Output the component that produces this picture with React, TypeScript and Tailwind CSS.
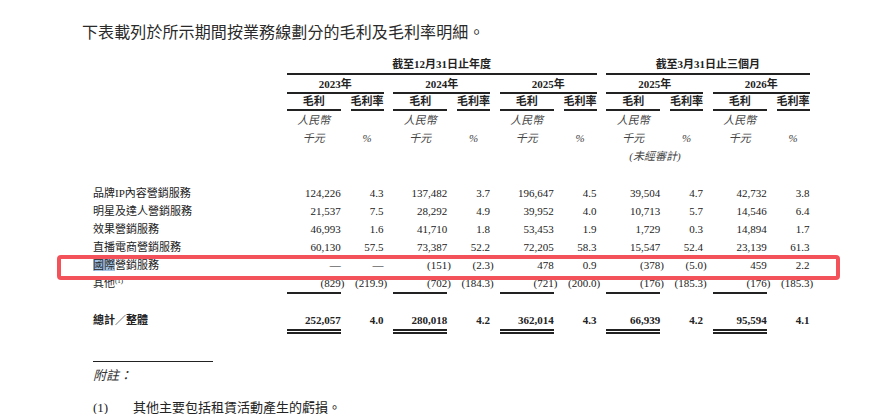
import React from "react";

const cols = "grid grid-cols-[184px_repeat(5,54px_33px)] gap-x-[9.75px]";

const rows: string[][] = [
  ["品牌IP內容營銷服務", "124,226", "4.3", "137,482", "3.7", "196,647", "4.5", "39,504", "4.7", "42,732", "3.8"],
  ["明星及達人營銷服務", "21,537", "7.5", "28,292", "4.9", "39,952", "4.0", "10,713", "5.7", "14,546", "6.4"],
  ["效果營銷服務", "46,993", "1.6", "41,710", "1.8", "53,453", "1.9", "1,729", "0.3", "14,894", "1.7"],
  ["直播電商營銷服務", "60,130", "57.5", "73,387", "52.2", "72,205", "58.3", "15,547", "52.4", "23,139", "61.3"],
  ["國際營銷服務", "—", "—", "(151)", "(2.3)", "478", "0.9", "(378)", "(5.0)", "459", "2.2"],
  ["其他", "(829)", "(219.9)", "(702)", "(184.3)", "(721)", "(200.0)", "(176)", "(185.3)", "(176)", "(185.3)"],
];

const total = ["總計／整體", "252,057", "4.0", "280,018", "4.2", "362,014", "4.3", "66,939", "4.2", "95,594", "4.1"];

const years = ["2023", "2024", "2025", "2025", "2026"];

function Val({ v }: { v: string }) {
  const hang = v.endsWith(")");
  return <span className={hang ? "inline-block -mr-[3.7px]" : "inline-block"}>{v}</span>;
}

function Label({ text }: { text: string }) {
  if (text === "國際營銷服務") {
    return (
      <span>
        <span className="bg-[#a4c2e2]">國際</span>營銷服務
      </span>
    );
  }
  if (text === "其他") {
    return (
      <span>
        其他<span className="relative -top-[4px] text-[7px]">(1)</span>
      </span>
    );
  }
  return <span>{text}</span>;
}

export default function App() {
  return (
    <div className="relative w-[875px] h-[414px] overflow-hidden bg-white text-[#222] font-['Liberation_Serif','Noto_Sans_CJK_TC',serif]">
      <div className="pl-[82px] pt-[23px] text-[16px] leading-[20px] tracking-[0.1px] text-[#2a2a2a]">
        下表載列於所示期間按業務線劃分的毛利及毛利率明細。
      </div>

      <div className="mt-[13px] pl-[93px]">
        <div className={cols}>
          {/* Row A */}
          <div />
          <div className="col-span-6 border-b-2 border-[#222] text-center font-bold text-[11px] leading-[17px]">
            截至12月31日止年度
          </div>
          <div className="col-span-4 border-b-2 border-[#222] text-center font-bold text-[11px] leading-[17px]">
            截至3月31日止三個月
          </div>

          {/* Row B */}
          <div />
          {years.map((y, i) => (
            <div
              key={"y" + i}
              className="col-span-2 border-b-2 border-[#222] text-center font-bold text-[11px] pt-[1px] leading-[16px]"
            >
              {y}年
            </div>
          ))}

          {/* Row C */}
          <div />
          {years.map((_, i) => (
            <React.Fragment key={"c" + i}>
              <div className="border-b-2 border-[#222] text-center font-bold text-[11px] leading-[15px]">毛利</div>
              <div className="border-b-2 border-[#222] text-center font-bold text-[11px] leading-[15px]">毛利率</div>
            </React.Fragment>
          ))}

          {/* Row D */}
          <div />
          {years.map((_, i) => (
            <React.Fragment key={"d" + i}>
              <div className="text-center italic text-[11px] leading-[18px] text-[#444]">人民幣</div>
              <div />
            </React.Fragment>
          ))}

          {/* Row E */}
          <div />
          {years.map((_, i) => (
            <React.Fragment key={"e" + i}>
              <div className="text-center italic text-[11px] leading-[18px] text-[#444]">千元</div>
              <div className="text-center italic text-[11px] leading-[18px] text-[#444]">%</div>
            </React.Fragment>
          ))}

          {/* Row F */}
          <div className="col-span-7" />
          <div className="col-span-2 pl-[23px] italic text-[11px] leading-[18px] text-[#444] whitespace-nowrap">
            (未經審計)
          </div>
          <div className="col-span-2" />

          {/* spacer */}
          <div className="col-span-11 h-[19px]" />

          {rows.map((r, ri) => (
            <React.Fragment key={"r" + ri}>
              <div className="text-[11px] leading-[18px] whitespace-nowrap">
                <Label text={r[0]} />
              </div>
              {r.slice(1).map((v, vi) => (
                <div
                  key={vi}
                  className={
                    "text-right text-[11px] leading-[18px] whitespace-nowrap " +
                    (ri === 5 && vi % 2 === 0 ? "border-b-2 border-[#222]" : "")
                  }
                >
                  <Val v={v} />
                </div>
              ))}
            </React.Fragment>
          ))}

          {/* spacer */}
          <div className="col-span-11 h-[17.4px]" />

          <div className="font-bold text-[11px] leading-[18px]">{total[0]}</div>
          {total.slice(1).map((v, vi) => (
            <div
              key={"t" + vi}
              className={
                "text-right font-bold text-[11px] leading-[18px] " +
                (vi % 2 === 0 ? "border-b-[5px] border-double border-[#222]" : "")
              }
            >
              {v}
            </div>
          ))}
        </div>

        {/* Footnote */}
        <div className="mt-[26.7px] w-[120px] h-px bg-[#222]" />
        <div className="mt-[5px] italic text-[13px] leading-[18px] text-[#333]">附註：</div>
        <div className="mt-[14px] flex text-[13px] leading-[18px]">
          <div className="w-[40px]">(1)</div>
          <div>其他主要包括租賃活動產生的虧損。</div>
        </div>
      </div>

      {/* highlight annotation */}
      <div className="absolute left-[57px] top-[255px] w-[783px] h-[25px] border-4 border-[#f4525a] rounded-[4px]" />
    </div>
  );
}
